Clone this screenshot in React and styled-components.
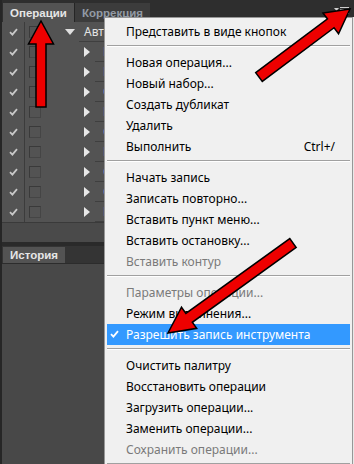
import React from "react";
import styled, { createGlobalStyle } from "styled-components";

const Global = createGlobalStyle`
  html, body { margin: 0; padding: 0; background: #262626; }
  body { width: 354px; height: 464px; overflow: hidden; }
`;

const Root = styled.div`
  position: relative;
  width: 354px;
  height: 464px;
  overflow: hidden;
  background: #262626;
  padding-left: 2px;
  box-sizing: border-box;
  display: flex;
  flex-direction: column;
  font-family: "Noto Sans", "Open Sans", sans-serif;
`;

const TabBar = styled.div`
  height: ${(p) => p.$h}px;
  background: ${(p) => p.$bg};
  display: flex;
  align-items: flex-end;
  padding-left: 1px;
  box-sizing: border-box;
  flex-shrink: 0;
`;

const Tab = styled.div`
  height: ${(p) => p.$h}px;
  display: flex;
  align-items: center;
  padding: 0 7px;
  font-family: "Liberation Sans", Arial, sans-serif;
  font-size: 11.5px;
  font-weight: 700;
  color: ${(p) => (p.$active ? "#e6e6e6" : "#929aa4")};
  background: ${(p) => (p.$active ? "#535353" : "#3c3c3c")};
  border-left: ${(p) => (p.$active ? "none" : "1px solid #252525")};
  white-space: nowrap;
`;

const MenuIconWrap = styled.div`
  margin-left: auto;
  align-self: center;
  margin-right: 5px;
  display: flex;
`;

const Panel = styled.div`
  width: 102px;
  overflow: hidden;
  background: #535353;
  display: flex;
  flex-direction: column;
`;

const Row = styled.div`
  height: 20px;
  display: flex;
`;

const CheckCell = styled.div`
  width: 22px;
  flex-shrink: 0;
  border-right: 1px solid #3c3c3c;
  display: flex;
  align-items: center;
  justify-content: center;
`;

const BoxCell = styled.div`
  width: 36px;
  flex-shrink: 0;
  padding-left: 4px;
  box-sizing: border-box;
  display: flex;
  align-items: center;
`;

const Box = styled.div`
  width: 12px;
  height: 12px;
  box-sizing: border-box;
  border: 1px solid #3a3a3a;
  border-right-color: #454545;
  border-bottom-color: #454545;
`;

const Toggle = styled.div`
  width: ${(p) => p.$w}px;
  flex-shrink: 0;
  display: flex;
  align-items: center;
  justify-content: ${(p) => (p.$end ? "flex-end" : "center")};
  padding-right: ${(p) => (p.$end ? 5 : 0)}px;
  box-sizing: border-box;
`;

const Label = styled.div`
  flex: 1;
  min-width: 0;
  border-bottom: 1px solid #3f3f3f;
  padding-left: ${(p) => p.$pad}px;
  font-size: 12px;
  line-height: 19px;
  color: ${(p) => p.$color};
  white-space: nowrap;
  overflow: hidden;
`;

const Footer = styled.div`
  height: 19px;
  background: #4a4a4a;
  border-top: 1px solid #3a3a3a;
  border-bottom: 4px solid #2a2a2a;
`;

const LowerBody = styled.div`
  flex: 1;
  background: #484848;
  border-top: 1px solid #2c2c2c;
`;

const Menu = styled.div`
  position: absolute;
  left: 104px;
  top: 17px;
  right: 1px;
  bottom: -10px;
  background: #f0f0f0;
  border: 1px solid #979797;
  padding: 3px 2px 0 2px;
  box-sizing: border-box;
  font-family: "Noto Sans", "Open Sans", sans-serif;
  font-size: 12px;
`;

const MenuEdge = styled.div`
  position: absolute;
  top: 17px;
  right: 0;
  width: 1px;
  bottom: 0;
  background: #e8e8e8;
`;

const Item = styled.div`
  height: 21px;
  display: flex;
  align-items: center;
  position: relative;
  padding-left: 19px;
  padding-right: 15px;
  color: ${(p) => (p.$selected ? "#ffffff" : p.$disabled ? "#7a7a7a" : "#000000")};
  background: ${(p) => (p.$selected ? "#3399ff" : "transparent")};
  white-space: nowrap;
`;

const Shortcut = styled.span`
  margin-left: auto;
`;

const CheckMark = styled.span`
  position: absolute;
  left: 3px;
  top: 6px;
  display: flex;
`;

const Separator = styled.div`
  margin: 3px 0 5px;
  border-top: 1px solid #a0a0a0;
  border-bottom: 1px solid #ffffff;
`;

const Overlay = styled.svg`
  position: absolute;
  left: 0;
  top: 0;
  pointer-events: none;
`;

const Check = ({ color = "#c8c8c8" }) => (
  <svg width="9" height="8" viewBox="0 0 9 8">
    <path d="M1 4.2 L3.4 6.6 L8 1.2" fill="none" stroke={color} strokeWidth="1.8" />
  </svg>
);

const TriDown = () => (
  <svg width="10" height="6" viewBox="0 0 10 6">
    <path d="M0 0 H10 L5 6 Z" fill="#e0e0e0" />
  </svg>
);

const TriRight = () => (
  <svg width="6" height="10" viewBox="0 0 6 10">
    <path d="M0 0 L6 5 L0 10 Z" fill="#e8e8e8" />
  </svg>
);

const PanelMenuIcon = () => (
  <svg width="15" height="8" viewBox="0 0 15 8">
    <path d="M0 1 H5 L2.5 4 Z" fill="#d0d0d0" />
    <rect x="6" y="0" width="9" height="1" fill="#d0d0d0" />
    <rect x="6" y="2" width="9" height="1" fill="#d0d0d0" />
    <rect x="6" y="4" width="9" height="1" fill="#d0d0d0" />
    <rect x="6" y="6" width="9" height="1" fill="#d0d0d0" />
  </svg>
);

const Arrow = ({ x1, y1, x2, y2, s = 5.5, h = 13, L = 23 }) => {
  const len = Math.hypot(x2 - x1, y2 - y1);
  const deg = (Math.atan2(y2 - y1, x2 - x1) * 180) / Math.PI;
  const b = len - L;
  const pts = `0,${-s} ${b},${-s} ${b},${-h} ${len},0 ${b},${h} ${b},${s} 0,${s}`;
  return (
    <polygon
      points={pts}
      transform={`translate(${x1} ${y1}) rotate(${deg})`}
      fill="#ee0000"
      stroke="#000"
      strokeWidth="1.5"
      strokeLinejoin="miter"
    />
  );
};

const actions = ["В", "Р", "О", "В", "С", "Р", "С", "С", "К"];

const menu = [
  { t: "Представить в виде кнопок" },
  { sep: true },
  { t: "Новая операция..." },
  { t: "Новый набор..." },
  { t: "Создать дубликат" },
  { t: "Удалить" },
  { t: "Выполнить", k: "Ctrl+/" },
  { sep: true },
  { t: "Начать запись" },
  { t: "Записать повторно..." },
  { t: "Вставить пункт меню..." },
  { t: "Вставить остановку..." },
  { t: "Вставить контур", d: true },
  { sep: true },
  { t: "Параметры операции...", d: true },
  { t: "Режим выполнения..." },
  { t: "Разрешить запись инструмента", sel: true },
  { sep: true },
  { t: "Очистить палитру" },
  { t: "Восстановить операции" },
  { t: "Загрузить операции..." },
  { t: "Заменить операции..." },
  { t: "Сохранить операции...", d: true },
  { sep: true },
];

export default function App() {
  return (
    <Root>
      <Global />
      <TabBar $h={22} $bg="#2e2e2e">
        <Tab $active $h={19}>Операции</Tab>
        <Tab $h={19}>Коррекция</Tab>
        <MenuIconWrap>
          <PanelMenuIcon />
        </MenuIconWrap>
      </TabBar>
      <Panel>
        <Row>
          <CheckCell>
            <Check />
          </CheckCell>
          <BoxCell>
            <Box />
          </BoxCell>
          <Toggle $w={18}>
            <TriDown />
          </Toggle>
          <Label $pad={5} $color="#e4e4e4">Авто</Label>
        </Row>
        {actions.map((a, i) => (
          <Row key={i}>
            <CheckCell>
              <Check />
            </CheckCell>
            <BoxCell>
              <Box />
            </BoxCell>
            <Toggle $w={34} $end>
              <TriRight />
            </Toggle>
            <Label $pad={8} $color="#7f9fd0">{a}</Label>
          </Row>
        ))}
        <Footer />
      </Panel>
      <TabBar $h={17} $bg="#343434">
        <Tab $active $h={16}>История</Tab>
      </TabBar>
      <LowerBody />
      <MenuEdge />
      <Menu>
        {menu.map((m, i) =>
          m.sep ? (
            <Separator key={i} />
          ) : (
            <Item key={i} $disabled={m.d} $selected={m.sel}>
              {m.sel && (
                <CheckMark>
                  <Check color="#ffffff" />
                </CheckMark>
              )}
              {m.t}
              {m.k && <Shortcut>{m.k}</Shortcut>}
            </Item>
          )
        )}
      </Menu>
      <Overlay width="354" height="464" viewBox="0 0 354 464">
        <Arrow x1={41} y1={107} x2={41} y2={21} s={5} h={12.5} L={23} />
        <Arrow x1={259} y1={77} x2={350} y2={9} s={5.5} h={13} L={24} />
        <Arrow x1={293} y1={243} x2={168} y2={333} s={5.5} h={13} L={26} />
      </Overlay>
    </Root>
  );
}
